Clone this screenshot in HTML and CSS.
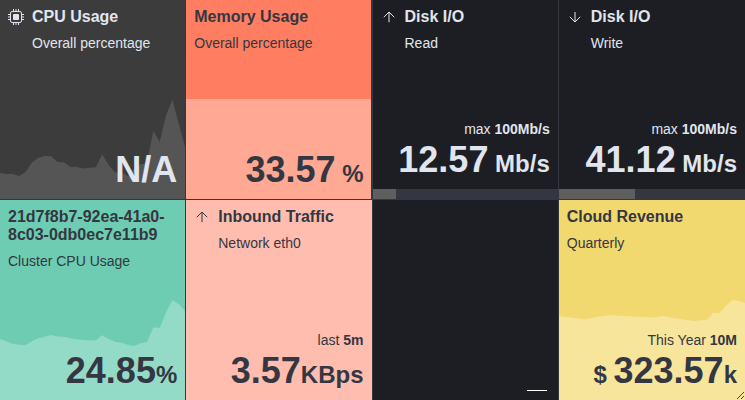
FILE: index.html
```
<!DOCTYPE html>
<html lang="en">
<head>
<meta charset="utf-8">
<title>Metrics</title>
<link rel="stylesheet" href="styles.css">
</head>
<body>
<main class="grid">
  <section class="metric cpu light">
    <svg class="spark" viewBox="0 0 29 200" preserveAspectRatio="none"><path d="M0 200V173L1 174L2 174L3 176L4 172L5 162.5L6 157.7L7 156L8 156.3L9 162L10 162.3L11 166.8L12 167L13 168.4L14 167.8L15 167.3L16 154.3L17 165L18 172.3L19 172.8L20 176L21 169L22 164.3L23 163.3L24 130.7L25 141.7L26 115L27 99.7L28 124L29 148V200Z"/></svg>
    <header class="head">
      <svg class="icon" viewBox="0 0 16 16"><rect x="2.5" y="2.5" width="11" height="11" rx="1.6" fill="none" stroke="currentColor"/><rect x="5" y="5" width="6" height="6" rx="1" fill="currentColor"/><path d="M5.5 0v2.5M8 0v2.5M10.5 0v2.5M5.5 13.5V16M8 13.5V16M10.5 13.5V16M0 5.5h2.5M0 8h2.5M0 10.5h2.5M13.5 5.5H16M13.5 8H16M13.5 10.5H16" stroke="currentColor"/></svg>
      <div><h2>CPU Usage</h2><p>Overall percentage</p></div>
    </header>
    <div class="foot"><div class="value">N/A</div></div>
  </section>
  <section class="metric memory">
    <div class="fill"></div>
    <header class="head"><div><h2>Memory Usage</h2><p>Overall percentage</p></div></header>
    <div class="foot"><div class="value">33.57<span class="unit"> %</span></div></div>
  </section>
  <section class="metric disk light">
    <header class="head">
      <svg class="icon" viewBox="0 0 16 16"><path d="M8 13.2V3.2M2.8 8.2L8 3L13.2 8.2" fill="none" stroke="currentColor"/></svg>
      <div><h2>Disk I/O</h2><p>Read</p></div>
    </header>
    <div class="foot"><div class="extra">max <b>100Mb/s</b></div><div class="value">12.57<span class="unit"> Mb/s</span></div></div>
    <div class="track"><div class="bar" style="width:12.57%"></div></div>
  </section>
  <section class="metric disk light">
    <header class="head">
      <svg class="icon" viewBox="0 0 16 16"><path d="M8 3v9.8M2.8 7.8L8 13L13.2 7.8" fill="none" stroke="currentColor"/></svg>
      <div><h2>Disk I/O</h2><p>Write</p></div>
    </header>
    <div class="foot"><div class="extra">max <b>100Mb/s</b></div><div class="value">41.12<span class="unit"> Mb/s</span></div></div>
    <div class="track"><div class="bar" style="width:41.12%"></div></div>
  </section>
  <section class="metric cluster">
    <svg class="spark" viewBox="0 0 29 200" preserveAspectRatio="none"><path d="M0 200V139L1 141.3L2 143.7L3 144.7L4 145L5 141L6 138.3L7 136.7L8 135L9 136.5L10 136.7L11 138.3L12 139.3L13 140L14 140.3L15 140.3L16 135.3L17 139L18 141.7L19 142.7L20 144.7L21 146L22 143.3L23 142L24 127.3L25 128L26 112.3L27 100L28 104.3L29 111V200Z"/></svg>
    <header class="head"><div><h2>21d7f8b7-92ea-41a0-8c03-0db0ec7e11b9</h2><p>Cluster CPU Usage</p></div></header>
    <div class="foot"><div class="value">24.85<span class="unit">%</span></div></div>
  </section>
  <section class="metric network">
    <header class="head">
      <svg class="icon" viewBox="0 0 16 16"><path d="M8 13.2V3.2M2.8 8.2L8 3L13.2 8.2" fill="none" stroke="currentColor"/></svg>
      <div><h2>Inbound Traffic</h2><p>Network eth0</p></div>
    </header>
    <div class="foot"><div class="extra">last <b>5m</b></div><div class="value">3.57<span class="unit">KBps</span></div></div>
  </section>
  <section class="metric empty"><div class="dash"></div></section>
  <section class="metric revenue">
    <svg class="spark" viewBox="0 0 29 200" preserveAspectRatio="none"><path d="M0 200V116L4 119.3L5 118L6 116.7L8 115L10 116L13 117L15 117.6L16 115.7L18 118.3L21 121L23 119.7L24 113L25 113L26 105.7L27 100L28 101L29 103V200Z"/></svg>
    <header class="head"><div><h2>Cloud Revenue</h2><p>Quarterly</p></div></header>
    <div class="foot"><div class="extra">This Year <b>10M</b></div><div class="value"><span class="unit">$ </span>323.57<span class="unit">k</span></div></div>
    <svg class="grip" viewBox="0 0 8 8"><path d="M0 7L7 0M4 7L7 4" stroke="currentColor" stroke-width=".9"/></svg>
  </section>
</main>
</body>
</html>
```
FILE: styles.css
```
* { box-sizing: border-box; }
body {
  margin: 0;
  font-family: "Liberation Sans", Arial, sans-serif;
  color: #343741;
}
.grid {
  display: grid;
  grid-template-columns: repeat(4, 1fr);
  grid-template-rows: 200px 200px;
  width: 745px;
  height: 400px;
  overflow: hidden;
}
.metric {
  position: relative;
  display: flex;
  flex-direction: column;
  justify-content: space-between;
  min-width: 0;
  padding: 8px;
  border-right: 1px solid #343741;
}
.metric:nth-child(4n) { border-right: 0; }
.metric:nth-child(-n+4) { border-bottom: 1px solid #343741; }
.light { color: #e0e5ee; }
.head {
  position: relative;
  display: flex;
  gap: 8px;
}
.icon {
  flex: none;
  width: 16px;
  height: 16px;
  margin-top: 1px;
}
h2 {
  margin: 0;
  font-size: 16px;
  line-height: 18px;
}
p {
  margin: 9px 0 0;
  font-size: 14px;
  line-height: 16px;
}
.foot {
  position: relative;
  text-align: right;
}
.extra {
  margin-bottom: 2px;
  font-size: 14px;
  line-height: 16px;
}
.value {
  font-size: 36px;
  font-weight: bold;
  line-height: 42px;
  white-space: pre;
}
.unit {
  font-size: 24px;
  line-height: 1;
}
.spark {
  position: absolute;
  left: 0;
  top: 0;
  width: 100%;
  height: 200px;
}
.cpu { background: #3c3c3c; overflow: hidden; }
.cpu .spark { fill: #555; }
.metric.memory {
  background: #ff7e62;
  border-right-width: 2px;
  padding-right: 7px;
}
.fill {
  position: absolute;
  inset: 99px 0 0;
  background: #ffa893;
}
.disk {
  background: #1d1e24;
  padding-bottom: 18px;
}
.track {
  position: absolute;
  inset: auto 0 0;
  height: 10px;
  background: #343741;
}
.bar {
  height: 100%;
  background: #5e5e5e;
}
.cluster { background: #6dccb1; }
.cluster .spark { fill: #93dac7; }
.network { background: #ffbdaf; }
.empty {
  background: #1d1e24;
  justify-content: flex-end;
  align-items: flex-end;
  padding: 0 11px 9px 0;
}
.dash {
  width: 20px;
  height: 1px;
  background: #fff;
}
.revenue { background: #f1d86f; }
.revenue .spark { fill: #f6e59b; }
.grip {
  position: absolute;
  right: 0;
  bottom: 0;
  width: 8px;
  height: 8px;
}
```
